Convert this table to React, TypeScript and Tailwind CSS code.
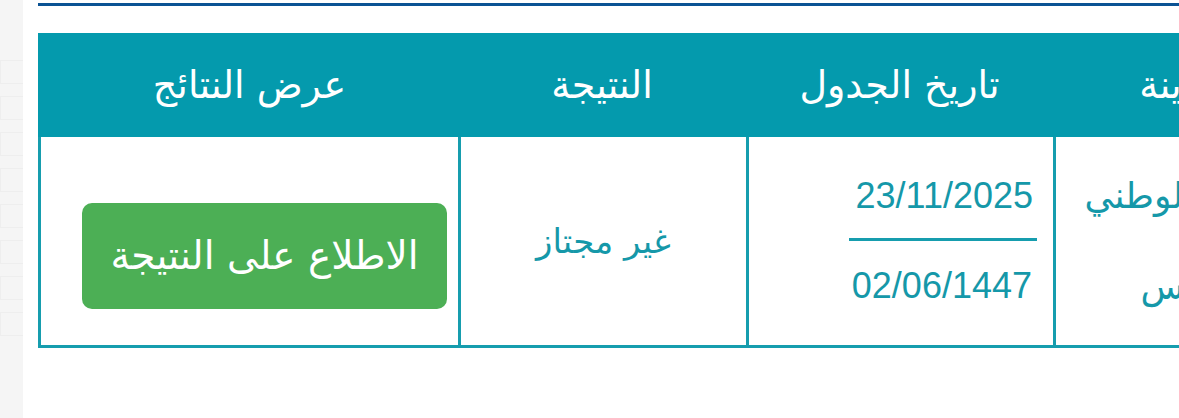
const arabic = "font-['DejaVu_Sans',sans-serif]";

function SideStrip() {
  return (
    <div className="flex h-full w-[23px] shrink-0 flex-col gap-[12px] bg-[#f5f5f5] py-[60px]">
      {[0, 1, 2, 3, 4, 5, 6, 7].map((i) => (
        <div key={i} className="h-[24px] w-full border-y border-l border-[#eeeeee]"></div>
      ))}
    </div>
  );
}

export default function App() {
  return (
    <div className="flex h-[418px] w-[1179px] overflow-hidden bg-white">
      <SideStrip />

      <div className="min-w-0 flex-1 pl-[15px]">
        {/* top rule */}
        <div className="mt-[3px] h-[3px] w-[1294px] bg-[#0b5394]"></div>

        <div dir="rtl" className={`mt-[27px] w-[1294px] ${arabic}`}>
          {/* header */}
          <div className="grid h-[104px] grid-cols-[279px_307px_288px_417px] border-l-[3px] border-[#049aad] bg-[#049aad] text-[38px] text-white">
            <div className="flex items-center justify-center">المدينة</div>
            <div className="flex items-center justify-center">تاريخ الجدول</div>
            <div className="flex items-center justify-center">النتيجة</div>
            <div className="flex items-center justify-center">عرض النتائج</div>
          </div>

          {/* body row */}
          <div className="grid h-[211px] grid-cols-[279px_307px_288px_417px] border-b-[3px] border-l-[3px] border-[#169dae] text-[#1598a9]">
            <div className="flex items-center justify-center border-l-[3px] border-[#169dae] text-center text-[36px] leading-[91px]">
              المركز الوطني
              <br />
              للقياس
            </div>

            <div className="flex flex-col items-start justify-center border-l-[3px] border-[#169dae] pr-[16px]">
              <div className="flex w-[188px] flex-col items-start font-['Liberation_Sans',sans-serif] text-[36px] leading-[44px]">
                <div dir="ltr" className="mr-[4px]">23/11/2025</div>
                <div className="mt-[20px] h-[3px] w-full bg-[#169dae]"></div>
                <div dir="ltr" className="mt-[23px] mr-[5px]">02/06/1447</div>
              </div>
            </div>

            <div className="flex items-center justify-center border-l-[3px] border-[#169dae] text-[34px]">
              غير مجتاز
            </div>

            <div className="flex items-start justify-end pt-[66px] pl-[41px]">
              <button className={`flex h-[106px] w-[365px] items-center justify-center rounded-[10px] bg-[#4caf55] text-[39px] text-white ${arabic}`}>
                الاطلاع على النتيجة
              </button>
            </div>
          </div>
        </div>
      </div>
    </div>
  );
}
